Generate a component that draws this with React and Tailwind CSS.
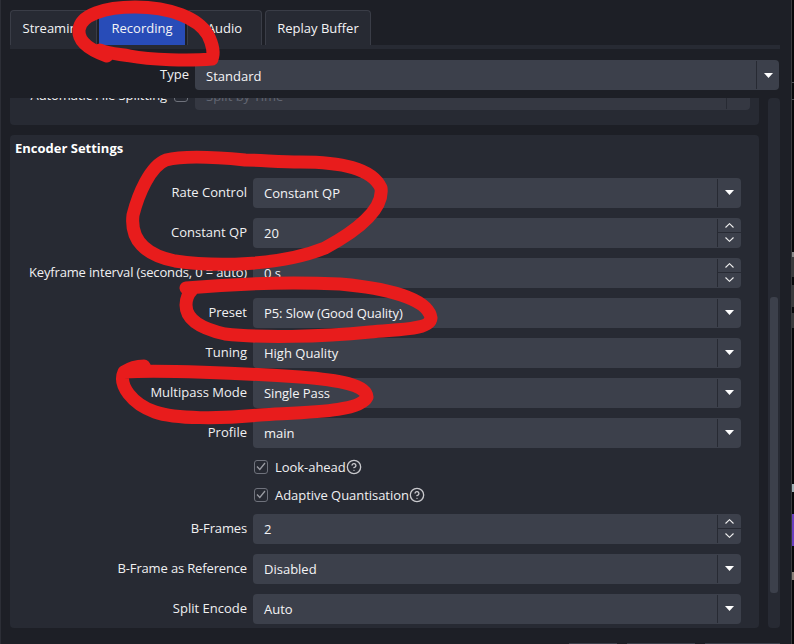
import React from "react";
import { CircleHelp } from "lucide-react";

const Tri = () => (
  <svg width="9" height="5" viewBox="0 0 9 5"><polygon points="0,0 9,0 4.5,5" fill="#ffffff" /></svg>
);
const Chev = ({ up }) => (
  <svg width="9" height="5" viewBox="0 0 9 5" fill="none" stroke="#f0f0f0" strokeWidth="1.1">
    <polyline points={up ? "0.5,4.5 4.5,0.7 8.5,4.5" : "0.5,0.5 4.5,4.3 8.5,0.5"} />
  </svg>
);

function Combo({ value, wide, disabled, tight }) {
  return (
    <div className={`flex h-[30px] flex-1 items-center rounded-[4px] ${disabled ? "bg-[#353842]" : "bg-[#3c404b]"}`}>
      <span className={`flex-1 pl-[11px] pt-[1px] ${tight ? "tracking-[-0.09px]" : ""} ${disabled ? "text-[#626672]" : "text-[#f4f4f6]"}`}>{value}</span>
      <div className={`flex h-[28px] items-center justify-center border-l border-[#272a33] ${wide ? "w-[23px]" : "w-[24px]"}`}>
        {!disabled && <Tri />}
      </div>
    </div>
  );
}

function Spin({ value }) {
  return (
    <div className="flex h-[30px] flex-1 items-center rounded-[4px] bg-[#3c404b]">
      <span className="flex-1 pl-[11px] pt-[1px] text-[#f4f4f6]">{value}</span>
      <div className="flex h-[28px] w-[24px] flex-col border-l border-[#272a33]">
        <div className="flex h-[14px] items-center justify-center border-b border-[#272a33]"><Chev up /></div>
        <div className="flex flex-1 items-center justify-center"><Chev /></div>
      </div>
    </div>
  );
}

function Row({ label, tight, children }) {
  return (
    <div className="flex h-[30px] items-center gap-[6px] pr-[18px]">
      <span className={`w-[237px] pb-[2px] text-right text-[#f0f0f2] ${tight ? "tracking-[-0.15px]" : ""}`}>{label}</span>
      {children}
    </div>
  );
}

function Check({ label }) {
  return (
    <div className="flex h-[16px] items-center pl-[244px]">
      <span className="flex h-[14px] w-[14px] items-center justify-center rounded-[3px] border border-[#6f727c]">
        <svg width="10" height="9" viewBox="0 0 10 9" fill="none" stroke="#9a9ca3" strokeWidth="1.3">
          <polyline points="1,4.5 3.8,7.5 9,1" />
        </svg>
      </span>
      <span className="ml-[7px] tracking-[-0.04px] text-[#f0f0f2]">{label}</span>
      <CircleHelp size={16} strokeWidth={2} className="text-[#c9c9cd]" />
    </div>
  );
}

function Tab({ label, w, active }) {
  return (
    <div
      className={`flex h-[35px] items-center justify-center rounded-t-[4px] border-x border-t ${
        active ? "border-[#284cb8] bg-[#284cb8]" : "border-[#3a3d47] bg-[#272a33]"
      } ${w} text-[#f4f4f6]`}
    >
      {label}
    </div>
  );
}

export default function App() {
  return (
    <div className="relative flex h-[644px] w-[794px] overflow-hidden bg-[#1d1f26] text-[13px] leading-[18px] font-['Open_Sans',sans-serif]">
      <div className="flex w-[791px] flex-col border-l border-[#2c2e36] pl-[9px]">
        <div className="mt-[10px] flex">
          <Tab label="Streaming" w="w-[87px]" />
          <div className="w-[2px]" />
          <Tab label="Recording" w="w-[86px]" active />
          <div className="w-[2px]" />
          <Tab label="Audio" w="w-[75px]" />
          <div className="w-[3px]" />
          <Tab label="Replay Buffer" w="w-[106px]" />
        </div>
        <div className="h-[4px] w-[770px] bg-[#272a33]" />

        <div className="mt-[11px] flex h-[30px] w-[769px] items-center gap-[6px]">
          <span className="w-[179px] pb-[2px] text-right text-[#f0f0f2]">Type</span>
          <Combo value="Standard" wide />
        </div>

        <div className="mt-[8px] flex h-[530px] w-[770px] justify-between">
          <div className="flex w-[749px] flex-col gap-[10px]">
            <div className="h-[27px] overflow-hidden rounded-b-[4px] bg-[#272a33]">
              <div className="-mt-[18px] flex h-[30px] items-center">
                <span className="w-[157px] text-right tracking-[-0.09px] text-[#f0f0f2]">Automatic File Splitting</span>
                <span className="ml-[7px] h-[14px] w-[14px] rounded-[3px] border border-[#6f727c]" />
                <div className="ml-[7px] flex w-[555px]">
                  <Combo value="Split by Time" disabled />
                </div>
              </div>
            </div>

            <div className="flex h-[494px] flex-col rounded-[4px] bg-[#272a33]">
              <div className="pl-[5px] pt-[4px] font-bold text-[#ffffff]">Encoder Settings</div>
              <div className="mt-[21px] flex flex-col gap-[10px]">
                <Row label="Rate Control"><Combo value="Constant QP" /></Row>
                <Row label="Constant QP"><Spin value="20" /></Row>
                <Row label="Keyframe interval (seconds, 0 = auto)" tight><Spin value="0 s" /></Row>
                <Row label="Preset"><Combo value="P5: Slow (Good Quality)" tight /></Row>
                <Row label="Tuning"><Combo value="High Quality" /></Row>
                <Row label="Multipass Mode"><Combo value="Single Pass" tight /></Row>
                <Row label="Profile"><Combo value="main" /></Row>
              </div>
              <div className="mt-[11px] flex flex-col gap-[12px]">
                <Check label="Look-ahead" />
                <Check label="Adaptive Quantisation" />
              </div>
              <div className="mt-[11px] flex flex-col gap-[10px]">
                <Row label="B-Frames" tight><Spin value="2" /></Row>
                <Row label="B-Frame as Reference" tight><Combo value="Disabled" /></Row>
                <Row label="Split Encode"><Combo value="Auto" /></Row>
              </div>
            </div>
          </div>

          <div className="flex w-[12px] flex-col items-center rounded-[4px] bg-[#272a33] pt-[199px]">
            <div className="h-[296px] w-[8px] rounded-[3px] bg-[#3c404b]" />
          </div>
        </div>

        <div className="mt-[15px] flex h-[1px] w-[770px] justify-end gap-[10px]">
          <div className="h-[1px] w-[48px] bg-[#3c404b]" />
          <div className="h-[1px] w-[68px] bg-[#3c404b]" />
          <div className="h-[1px] w-[75px] bg-[#3c404b]" />
        </div>
      </div>

      <div className="flex h-[644px] w-[3px] flex-col border-l border-[#3a3a3d] bg-[#08080a]">
        <div className="h-[82px]" />
        <div className="h-[1px] bg-[#55555a]" />
        <div className="h-[16px]" />
        <div className="h-[1px] bg-[#55555a]" />
        <div className="h-[152px]" />
        <div className="h-[5px] bg-[#8a8a8a]" />
        <div className="h-[20px] bg-[#3a3a3c]" />
        <div className="h-[8px]" />
        <div className="h-[22px] bg-[#3a3a3c]" />
        <div className="h-[6px]" />
        <div className="h-[15px] bg-[#3a3a3c]" />
        <div className="h-[156px]" />
        <div className="h-[8px] bg-[#9fb0b5]" />
        <div className="h-[22px]" />
        <div className="h-[32px] bg-[#6a3ec0]" />
        <div className="h-[26px]" />
        <div className="h-[8px] bg-[#8a8078]" />
      </div>

      <svg className="pointer-events-none absolute left-0 top-0" width="794" height="644" fill="none" stroke="#e81c1c" strokeWidth="13" strokeLinecap="round" strokeLinejoin="round">
        <path d="M107 56 C90 50 78 42 79 30 C80 15 105 7 135 7 C170 7 198 18 208 35 C213 45 214 54 212 59 C190 61 150 60 130 56 C120 54 110 54 100 50" />
        <path d="M245 160 C215 157 185 155 166 160 C150 166 138 195 133 215 C130 240 145 255 175 261 C215 267 280 266 325 248 C355 232 384 210 381 188 C372 168 340 162 300 162 C280 162 260 160 245 160" />
        <path d="M186 288 C230 284 290 282 340 284 C385 288 428 298 431 318 C430 330 400 329 370 332 C320 337 260 338 225 334 C198 328 186 318 186 305 C186 298 188 294 192 290" />
        <path d="M124 372 C160 370 240 373 300 377 C340 380 366 385 367 397 C360 412 310 412 260 415 C220 419 175 419 155 412 C132 404 118 385 124 372 C130 368 138 366 144 366" />
      </svg>
    </div>
  );
}
